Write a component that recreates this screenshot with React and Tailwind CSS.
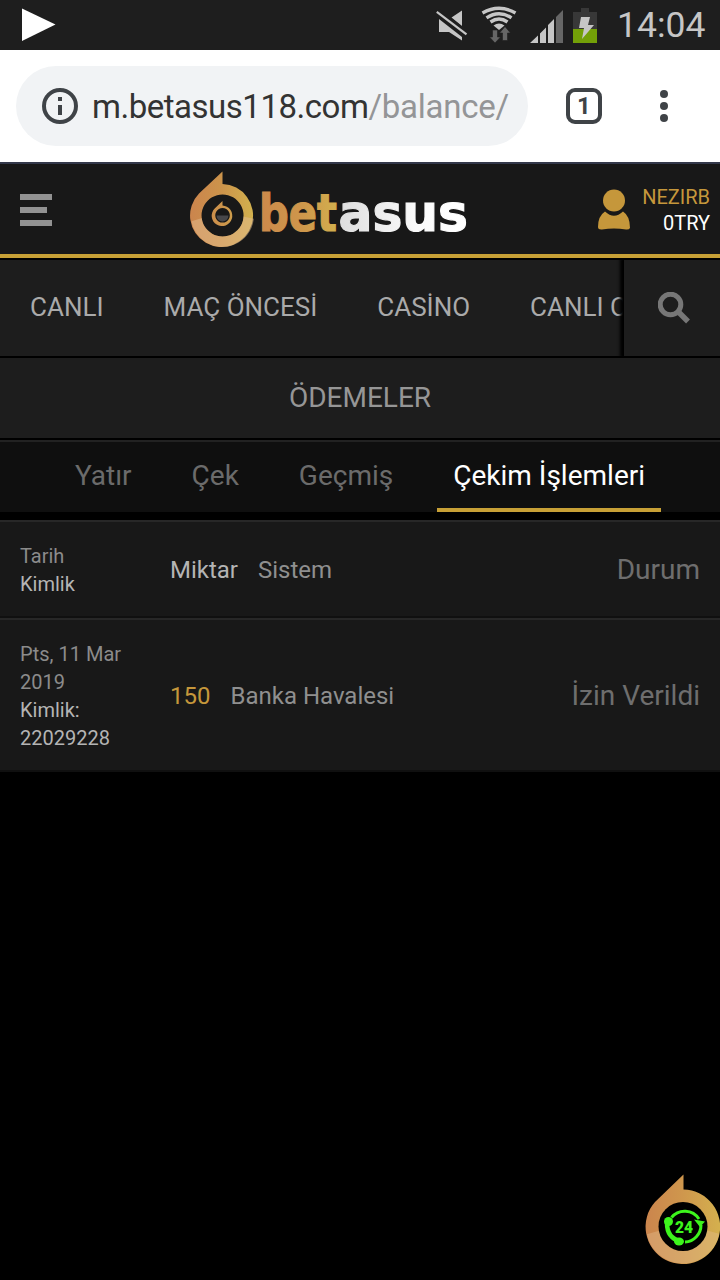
import React from "react";

function StatusBar() {
  return (
    <div className="flex h-[50px] items-center bg-[#1e1e1e]">
      <svg className="ml-[22px] h-[34px] w-[34px] shrink-0" viewBox="0 0 34 34">
        <path d="M0 0.5 33.5 16.5 0 33z" fill="#fff" />
      </svg>
      <svg className="ml-auto h-[50px] w-[184px] shrink-0" viewBox="430 0 184 50">
        <g fill="#c6c6c6">
          <path d="M462 10.5V26L451.5 17.5zM439 19 455 31.500 462 37V40.500L449 32H439z" />
        </g>
        <path d="M437.500 11.500 467 34" stroke="#1e1e1e" strokeWidth="6" />
        <path d="M436.800 11.800 466.500 34.300" stroke="#c6c6c6" strokeWidth="2.200" />
        <g fill="none" stroke="#c6c6c6" strokeWidth="3.400">
          <path d="M482.500 13Q499 3.500 515.500 13" />
          <path d="M486.500 17.800Q499 9.500 511.500 17.800" />
          <path d="M490.500 22Q499 16 507.500 22" />
        </g>
        <path d="M493.500 25.500Q499 21.500 504.500 25.500L499 30z" fill="#c6c6c6" />
        <path d="M492.500 30h5v7h3l-5.500 6-5.500-6h3zM502.500 40.500V33h-3l5.500-6.500 5.500 6.500h-3v7.500z" fill="#666" stroke="#1e1e1e" strokeWidth="0.600" />
        <path d="M530 43 538 35.500V43zM540 33.500 546 27.500V43H540zM548 25 554 19V43H548z" fill="#c6c6c6" />
        <path d="M556 17 563 10V43H556z" fill="#666" />
        <path d="M581 8h8v4h8v17h-24V12h8z" fill="#383838" />
        <path d="M573 29h24v14h-24z" fill="#73a008" />
        <path d="M581 17h9l-2 8h6l-12 14 2-11h-5z" fill="#c6c6c6" />
      </svg>
      <div className="w-[106px] pl-[3px] text-[35.500px] leading-[50px] text-[#c6c6c6]">14:04</div>
    </div>
  );
}

function AddressBar() {
  return (
    <div className="flex h-[114px] items-center border-b-2 border-[#33384a] bg-white pl-4">
      <div className="flex h-20 w-[512px] items-center rounded-full bg-[#f1f3f5] pl-[26px]">
        <svg className="h-9 w-9 shrink-0" viewBox="0 0 36 36">
          <circle cx="18" cy="18" r="16" fill="none" stroke="#3f4347" strokeWidth="4" />
          <path d="M16 9h4v4h-4zM16 17h4v10h-4z" fill="#3f4347" />
        </svg>
        <div className="mt-[2px] ml-[14px] text-[33px] leading-10 tracking-[-0.48px] whitespace-nowrap text-[#333]">
          m.betasus118.com<span className="tracking-[-0.25px] text-[#949597]">/balance/</span>
        </div>
      </div>
      <div className="ml-[38px] flex h-9 w-9 items-center justify-center rounded-[9px] border-4 border-[#3f4347] text-[24px] leading-7 font-bold text-[#3f4347]">
        1
      </div>
      <div className="ml-[58px] flex flex-col gap-1">
        <div className="h-2 w-2 rounded-full bg-[#3f4347]" />
        <div className="h-2 w-2 rounded-full bg-[#3f4347]" />
        <div className="h-2 w-2 rounded-full bg-[#3f4347]" />
      </div>
    </div>
  );
}

function Logo() {
  return (
    <svg className="h-[80px] w-[284px] overflow-visible" viewBox="188 170 284 80">
      <defs>
        <linearGradient id="ring" x1="190" x2="253" y1="0" y2="0" gradientUnits="userSpaceOnUse">
          <stop offset="0" stopColor="#cb854d" />
          <stop offset="0.5" stopColor="#cc944b" />
          <stop offset="1" stopColor="#d2b24e" />
        </linearGradient>
        <linearGradient id="word" x1="261" x2="467" y1="0" y2="0" gradientUnits="userSpaceOnUse">
          <stop offset="0" stopColor="#cb8a4b" />
          <stop offset="0.2" stopColor="#ce974b" />
          <stop offset="0.37" stopColor="#d2b04e" />
          <stop offset="0.375" stopColor="#dedede" />
          <stop offset="0.75" stopColor="#fafafa" />
          <stop offset="1" stopColor="#fff" />
        </linearGradient>
        <clipPath id="low">
          <path d="M188 223 221 213 254 220V250H188z" />
        </clipPath>
      </defs>
      <path fillRule="evenodd" fill="url(#ring)" d="M221.500 172.500V185A31.500 31.500 0 1 1 198 194.500zM221.500 195.500a21 21 0 1 0 0.100 0z" />
      <path fillRule="evenodd" fill="#e3bd91" opacity="0.5" clipPath="url(#low)" d="M221.500 185A31.500 31.500 0 1 1 221.400 185zM221.500 195.500a21 21 0 1 0 0.100 0z" />
      <path fillRule="evenodd" fill="url(#ring)" d="M221.500 202V206.500A10.300 10.300 0 1 1 213.700 209.500zM221.500 209a7.300 7.300 0 1 0 0.100 0z" />
      <path d="M215.500 216.500h12a6 6 0 0 1-12 0z" fill="#47474a" />
      <g
        fontFamily="DejaVu Sans, sans-serif"
        fontWeight="700"
        fontSize="51"
        fill="url(#word)"
        stroke="url(#word)"
        strokeWidth="1.200"
      >
        <text x="258" y="231.500" textLength="78" lengthAdjust="spacingAndGlyphs">bet</text>
        <text x="337.500" y="231.500" textLength="129.500" lengthAdjust="spacingAndGlyphs">asus</text>
      </g>
    </svg>
  );
}

function Header() {
  return (
    <header className="flex h-[96px] items-start border-b-2 border-black bg-[#181818]">
      <div className="flex h-[94px] w-full items-center border-b-4 border-[#c7a036] pr-[10px] pl-5">
        <div className="mt-[2px] flex w-8 flex-col gap-[7px]">
          <div className="h-[6px] w-8 bg-[#929292]" />
          <div className="h-[6px] w-[27px] bg-[#929292]" />
          <div className="h-[6px] w-8 bg-[#929292]" />
        </div>
        <div className="ml-[137px]">
          <Logo />
        </div>
        <svg className="mt-[2px] ml-auto h-[42px] w-[34px] shrink-0" viewBox="597 189 34 42">
          <circle cx="614" cy="200.500" r="11" fill="#c5973b" />
          <path d="M605 211.500Q614 220 623 211.500Q630 216 630 228Q629 229.800 626 229.500Q614 227.500 602 229.500Q598 229.800 598 227Q598 216 605 211.500z" fill="#c5973b" />
        </svg>
        <div className="mt-[2px] ml-[11px] w-[68px] text-right text-[20px] leading-[26px]">
          <div className="text-[#c5973b]">NEZIRB</div>
          <div className="text-white">0TRY</div>
        </div>
      </div>
    </header>
  );
}

function MainNav() {
  return (
    <nav className="flex h-[98px] border-b-2 border-black bg-[#1d1d1d]">
      <div className="flex w-[624px] items-center overflow-hidden pb-[2px] text-[26px] whitespace-nowrap text-[#aaa]">
        {["CANLI", "MAÇ ÖNCESİ", "CASİNO", "CANLI CASİNO"].map((t) => (
          <div key={t} className="shrink-0 px-[30px] leading-9">{t}</div>
        ))}
      </div>
      <div className="z-10 flex w-24 items-center justify-center bg-[#1d1d1d] pl-1 shadow-[-2px_0_3px_2px_#000] [clip-path:inset(0_0_0_-8px)]">
        <svg className="h-8 w-8" viewBox="658 292 32 32">
          <circle cx="670.500" cy="304.500" r="10.300" fill="none" stroke="#777" strokeWidth="5" />
          <path d="M677.500 311 688 321.500" stroke="#777" strokeWidth="5.500" />
        </svg>
      </div>
    </nav>
  );
}

function Tabs() {
  const tabs = ["Yatır", "Çek", "Geçmiş", "Çekim İşlemleri"];
  return (
    <div className="flex h-[72px] justify-center gap-[28px] border-t-2 border-[#222] bg-[#0f0f0f] text-[28px]">
      {tabs.map((t, i) => (
        <div
          key={t}
          className={
            i === 3
              ? "h-[70px] border-b-4 border-[#c7a036] px-4 leading-[67px] text-white"
              : "h-[70px] px-4 leading-[67px] text-[#6b6b6b]"
          }
        >
          {t}
        </div>
      ))}
    </div>
  );
}

function Row({ date, id, amount, amountClass, system, status }) {
  return (
    <div className="flex items-center border-t-2 border-b-2 border-t-[#272727] border-b-[#101010] bg-[#181818] px-5 pt-5 pb-[18px]">
      <div className="w-[150px] text-[20px] leading-7">
        <div className="w-[110px] text-[#8b8b8b]">{date}</div>
        <div className="w-[110px] text-[#b4b4b4]">{id}</div>
      </div>
      <div className={amountClass}>{amount}</div>
      <div className="ml-5 text-[24px] leading-7 text-[#8f8f8f]">{system}</div>
      <div className="ml-auto text-[28px] leading-8 text-[#6e6e6e]">{status}</div>
    </div>
  );
}

function SupportBadge() {
  return (
    <div className="absolute right-0 bottom-[14px]">
      <svg className="block h-[92px] w-[76px]" viewBox="644 1174 76 92">
        <defs>
          <linearGradient id="badge" x1="646" x2="720" y1="0" y2="0" gradientUnits="userSpaceOnUse">
            <stop offset="0" stopColor="#cb854d" />
            <stop offset="0.5" stopColor="#cf974d" />
            <stop offset="1" stopColor="#d4b04e" />
          </linearGradient>
          <clipPath id="badgeLow">
            <path d="M644 1235 683 1224 720 1234V1266H644z" />
          </clipPath>
        </defs>
        <path fill="url(#badge)" d="M683.500 1174.500V1189.500A37.300 37.300 0 1 1 655 1202z" />
        <circle cx="683" cy="1226.500" r="37" fill="#e3bd91" opacity="0.400" clipPath="url(#badgeLow)" />
        <circle cx="683" cy="1226.500" r="24.500" fill="#000" />
        <g fill="none" stroke="#3df51c" strokeWidth="3">
          <path d="M671.500 1217.500A17 17 0 0 1 699 1219M701 1225A17 17 0 0 1 685 1242" />
          <path d="M667 1223Q667 1238 680 1241" strokeWidth="4.500" />
        </g>
        <path d="M694 1219.500 705 1221.500 700 1227z" fill="#3df51c" />
        <ellipse cx="668.500" cy="1221.500" rx="4.500" ry="4.500" fill="#3df51c" />
        <ellipse cx="679" cy="1241.500" rx="5" ry="4" fill="#3df51c" />
        <text x="675" y="1232.500" textLength="18" lengthAdjust="spacingAndGlyphs" fontFamily="Roboto, sans-serif" fontWeight="900" fontSize="17" fill="#3df51c">
          24
        </text>
      </svg>
    </div>
  );
}

export default function App() {
  return (
    <div className="relative flex h-[1280px] w-[720px] flex-col overflow-hidden bg-black font-[Roboto,sans-serif]">
      <StatusBar />
      <AddressBar />
      <Header />
      <MainNav />
      <div className="flex h-[82px] items-center justify-center border-b-2 border-black bg-[#1d1d1d] text-[28px] text-[#969696]">
        ÖDEMELER
      </div>
      <Tabs />
      <div className="mt-2">
        <Row date="Tarih" id="Kimlik" amount="Miktar" amountClass="text-[24px] leading-7 text-[#b4b4b4]" system="Sistem" status="Durum" />
        <Row date="Pts, 11 Mar 2019" id="Kimlik: 22029228" amount="150" amountClass="text-[24px] leading-7 text-[#c5973b]" system="Banka Havalesi" status="İzin Verildi" />
      </div>
      <SupportBadge />
    </div>
  );
}
